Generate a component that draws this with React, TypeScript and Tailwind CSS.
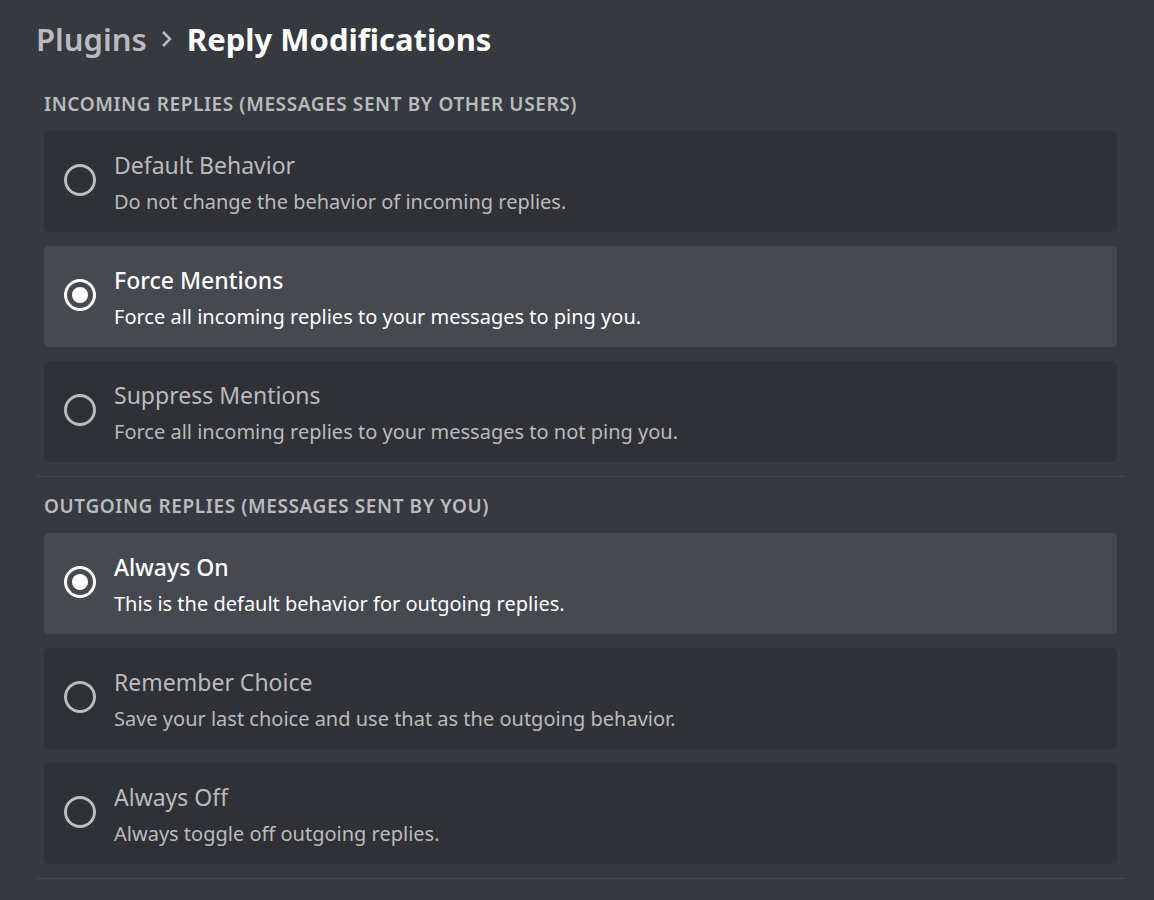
import React from "react";

type Option = {
  title: string;
  desc: string;
  selected?: boolean;
};

const incoming: Option[] = [
  { title: "Default Behavior", desc: "Do not change the behavior of incoming replies." },
  { title: "Force Mentions", desc: "Force all incoming replies to your messages to ping you.", selected: true },
  { title: "Suppress Mentions", desc: "Force all incoming replies to your messages to not ping you." },
];

const outgoing: Option[] = [
  { title: "Always On", desc: "This is the default behavior for outgoing replies.", selected: true },
  { title: "Remember Choice", desc: "Save your last choice and use that as the outgoing behavior." },
  { title: "Always Off", desc: "Always toggle off outgoing replies." },
];

function Radio({ checked }: { checked?: boolean }) {
  return (
    <div
      className={`w-8 h-8 shrink-0 -mt-1 rounded-full border-[3px] flex items-center justify-center ${
        checked ? "border-white" : "border-[#b9bbbe]"
      }`}
    >
      {checked && <div className="w-4 h-4 rounded-full bg-white" />}
    </div>
  );
}

function OptionCard({ option }: { option: Option }) {
  return (
    <div
      className={`flex items-center gap-[18px] h-[101px] px-5 rounded-[5px] ${
        option.selected ? "bg-[#464950]" : "bg-[#2f3136]"
      }`}
    >
      <Radio checked={option.selected} />
      <div className="flex flex-col gap-[10px] pt-[2px]">
        <div
          className={`text-[23px] leading-[27px] ${
            option.selected ? "text-white font-medium" : "text-[#b9bbbe]"
          }`}
        >
          {option.title}
        </div>
        <div
          className={`text-[20px] leading-[25px] ${
            option.selected ? "text-white" : "text-[#b9bbbe]"
          }`}
        >
          {option.desc}
        </div>
      </div>
    </div>
  );
}

function Section({ label, options }: { label: string; options: Option[] }) {
  return (
    <section className="border-b border-[#44474d] pb-[14px]">
      <h2 className="px-2 text-[19px] leading-[22px] tracking-[0.6px] font-semibold text-[#b9bbbe] uppercase mb-[16px]">
        {label}
      </h2>
      <div className="flex flex-col gap-[14px] px-2">
        {options.map((o) => (
          <OptionCard key={o.title} option={o} />
        ))}
      </div>
    </section>
  );
}

export default function App() {
  return (
    <div
      className="min-h-[900px] bg-[#36393f] pl-9 pr-[29px] pt-[18px]"
      style={{ fontFamily: '"Noto Sans", "Open Sans", sans-serif' }}
    >
      <h1 className="flex items-center text-[31px] leading-[42px] font-bold mb-[33px]">
        <span className="text-[#b9bbbe] font-semibold">Plugins</span>
        <svg width="14" height="20" viewBox="0 0 14 20" className="text-[#b9bbbe] mx-[13px]">
          <path d="M3 3l7 7-7 7" fill="none" stroke="currentColor" strokeWidth="2.5" />
        </svg>
        <span className="text-white">Reply Modifications</span>
      </h1>
      <Section label="Incoming Replies (Messages sent by other users)" options={incoming} />
      <div className="h-[18px]" />
      <Section label="Outgoing Replies (Messages sent by you)" options={outgoing} />
    </div>
  );
}
